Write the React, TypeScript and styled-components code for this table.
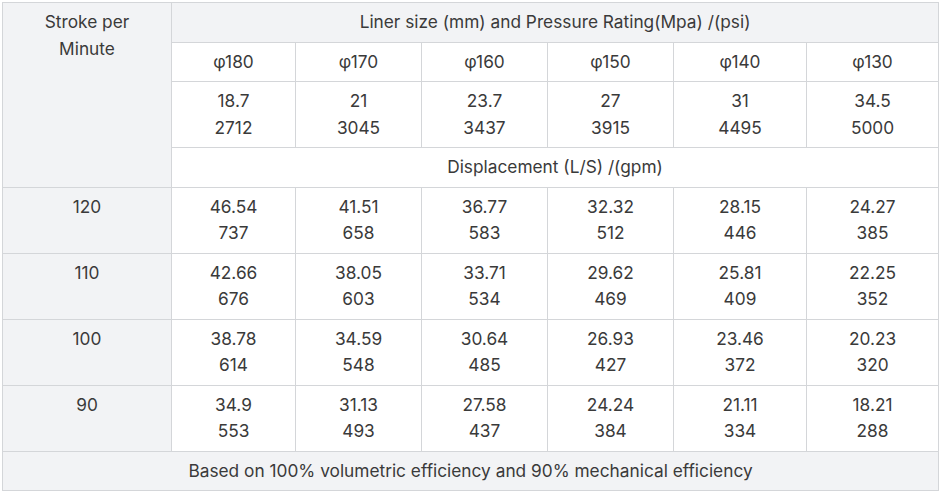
import { createGlobalStyle } from 'styled-components';
import styled from 'styled-components';

const GlobalStyle = createGlobalStyle`
  body {
    margin: 0;
    background: #ffffff;
    font-family: Inter, "Noto Sans", sans-serif;
  }
`;

const Wrap = styled.div`
  padding: 2px 0 0 2px;
`;

const Table = styled.table`
  border-collapse: collapse;
  table-layout: fixed;
  width: 937px;
  font-size: 17.3px;
  line-height: 26.5px;
  color: #3a3a3a;
`;

const Cell = styled.td<{ $shade?: boolean }>`
  border: 1px solid #d4d6d9;
  padding: 6px 4px;
  text-align: center;
  vertical-align: top;
  background: ${(p) => (p.$shade ? '#f2f3f5' : '#ffffff')};
`;

const liners = ['φ180', 'φ170', 'φ160', 'φ150', 'φ140', 'φ130'];
const ratings = [
  ['18.7', '2712'],
  ['21', '3045'],
  ['23.7', '3437'],
  ['27', '3915'],
  ['31', '4495'],
  ['34.5', '5000'],
];
const rows: { spm: string; vals: string[][] }[] = [
  { spm: '120', vals: [['46.54', '737'], ['41.51', '658'], ['36.77', '583'], ['32.32', '512'], ['28.15', '446'], ['24.27', '385']] },
  { spm: '110', vals: [['42.66', '676'], ['38.05', '603'], ['33.71', '534'], ['29.62', '469'], ['25.81', '409'], ['22.25', '352']] },
  { spm: '100', vals: [['38.78', '614'], ['34.59', '548'], ['30.64', '485'], ['26.93', '427'], ['23.46', '372'], ['20.23', '320']] },
  { spm: '90', vals: [['34.9', '553'], ['31.13', '493'], ['27.58', '437'], ['24.24', '384'], ['21.11', '334'], ['18.21', '288']] },
];
const widths = [169, 124, 126, 126, 126, 133, 132];

const Pair = ({ v }: { v: string[] }) => (
  <>
    {v[0]}
    <br />
    {v[1]}
  </>
);

export default function App() {
  return (
    <Wrap>
      <GlobalStyle />
      <Table>
        <colgroup>
          {widths.map((w, i) => (
            <col key={i} style={{ width: w }} />
          ))}
        </colgroup>
        <tbody>
          <tr>
            <Cell $shade rowSpan={4}>
              Stroke per
              <br />
              Minute
            </Cell>
            <Cell $shade colSpan={6}>
              Liner size (mm) and Pressure Rating(Mpa) /(psi)
            </Cell>
          </tr>
          <tr>
            {liners.map((l) => (
              <Cell key={l}>{l}</Cell>
            ))}
          </tr>
          <tr>
            {ratings.map((r, i) => (
              <Cell key={i}>
                <Pair v={r} />
              </Cell>
            ))}
          </tr>
          <tr>
            <Cell colSpan={6}>Displacement (L/S) /(gpm)</Cell>
          </tr>
          {rows.map((row) => (
            <tr key={row.spm}>
              <Cell $shade>{row.spm}</Cell>
              {row.vals.map((v, i) => (
                <Cell key={i}>
                  <Pair v={v} />
                </Cell>
              ))}
            </tr>
          ))}
          <tr>
            <Cell $shade colSpan={7}>
              Based on 100% volumetric efficiency and 90% mechanical efficiency
            </Cell>
          </tr>
        </tbody>
      </Table>
    </Wrap>
  );
}
